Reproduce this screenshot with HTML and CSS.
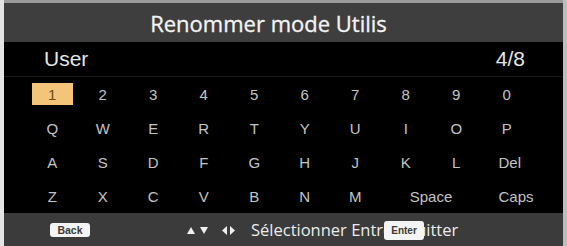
FILE: index.html
```html
<!DOCTYPE html>
<html>
<head>
<meta charset="utf-8">
<link rel="stylesheet" href="styles.css">
</head>
<body>
<div class="frame">
  <div class="panel">
    <div class="header"><span class="title">Renommer mode Utilis</span></div>
    <div class="main">
      <div class="namebar"><span class="name">User</span><span class="count">4/8</span></div>
      <div class="keys">
        <span class="key sel"><span class="hl">1</span></span>
        <span class="key">2</span><span class="key">3</span><span class="key">4</span><span class="key">5</span>
        <span class="key">6</span><span class="key">7</span><span class="key">8</span><span class="key">9</span><span class="key">0</span>
        <span class="key">Q</span><span class="key">W</span><span class="key">E</span><span class="key">R</span><span class="key">T</span>
        <span class="key">Y</span><span class="key">U</span><span class="key">I</span><span class="key">O</span><span class="key">P</span>
        <span class="key">A</span><span class="key">S</span><span class="key">D</span><span class="key">F</span><span class="key">G</span>
        <span class="key">H</span><span class="key">J</span><span class="key">K</span><span class="key">L</span><span class="key wide">Del</span>
        <span class="key">Z</span><span class="key">X</span><span class="key">C</span><span class="key">V</span><span class="key">B</span>
        <span class="key">N</span><span class="key">M</span><span class="key space">Space</span><span class="key wide">Caps</span>
      </div>
    </div>
    <div class="footer">
      <span class="btn back">Back</span>
      <span class="arrows">
        <svg class="ar" width="8" height="7" viewBox="0 0 8 7"><polygon points="4,0 8,7 0,7" fill="#efefef"/></svg>
        <svg class="ar" width="8" height="7" viewBox="0 0 8 7"><polygon points="0,0 8,0 4,7" fill="#efefef"/></svg>
        <svg class="ar lr" width="5" height="9" viewBox="0 0 5 9"><polygon points="5,0 5,9 0,4.5" fill="#efefef"/></svg>
        <svg class="ar" width="5" height="9" viewBox="0 0 5 9"><polygon points="0,0 5,4.5 0,9" fill="#efefef"/></svg>
      </span>
      <span class="hint">Sélectionner Entrer Quitter<span class="btn enter">Enter</span></span>
    </div>
  </div>
</div>
</body>
</html>
```
FILE: styles.css
```css
html, body {
  margin: 0;
  padding: 0;
  background: #d9d9d9;
}
.frame {
  width: 567px;
  height: 246px;
  box-sizing: border-box;
  padding: 3px 4px 0 4px;
  background: linear-gradient(to right, #e4e4e4 0, #e4e4e4 4px, #9a9a9a 4px, #9a9a9a 563px, #bdbdbd 563px);
}
.panel {
  height: 100%;
  display: flex;
  flex-direction: column;
  background: #000;
}
.header {
  height: 39px;
  background: #3e3e3e;
  display: flex;
  align-items: center;
  justify-content: center;
  padding-right: 30px;
}
.title {
  font-family: "Open Sans", sans-serif;
  font-size: 22px;
  color: #f4f4f4;
  -webkit-text-stroke: 0.3px #f4f4f4;
}
.main {
  flex: 1;
  background: #000;
  display: flex;
  flex-direction: column;
}
.namebar {
  height: 35px;
  display: flex;
  align-items: center;
  justify-content: space-between;
  padding: 0 38px 0 40px;
  border-bottom: 1px solid #1a1a1a;
  box-sizing: border-box;
}
.name, .count {
  font-family: "Liberation Sans", Arial, sans-serif;
  font-size: 21px;
  color: #e6e6e6;
}
.keys {
  display: grid;
  grid-template-columns: repeat(10, 50.5px);
  grid-auto-rows: 34px;
  padding-left: 23px;
}
.key {
  display: flex;
  align-items: center;
  justify-content: center;
  font-family: "Liberation Sans", Arial, sans-serif;
  font-size: 15px;
  color: #c4c4c4;
}
.key.wide {
  justify-content: flex-start;
  padding-left: 17px;
}
.key.space {
  grid-column: span 2;
}
.hl {
  width: 41px;
  height: 22px;
  background: #f4c47a;
  color: #6a4a18;
  display: flex;
  align-items: center;
  justify-content: center;
}
.footer {
  height: 33px;
  background: #3b3b3b;
  display: flex;
  align-items: center;
  position: relative;
  font-family: "Open Sans", sans-serif;
}
.btn {
  background: #f4f4f4;
  color: #3a3a3a;
  border-radius: 3px;
  font-family: "Liberation Sans", Arial, sans-serif;
  font-weight: bold;
  font-size: 10.5px;
  display: flex;
  align-items: center;
  justify-content: center;
}
.back {
  width: 40px;
  height: 14px;
  margin-left: 46px;
}
.arrows {
  display: flex;
  align-items: center;
  margin-left: 97px;
  margin-top: 2px;
}
.ar {
  display: block;
  margin-right: 5px;
}
.ar.lr {
  margin-left: 9px;
  margin-right: 3px;
}
.hint {
  margin-left: 11px;
  font-size: 16.5px;
  color: #ececec;
  position: relative;
}
.enter {
  position: absolute;
  left: 133px;
  top: 3px;
  width: 40px;
  height: 19px;
  font-size: 10px;
}
```
